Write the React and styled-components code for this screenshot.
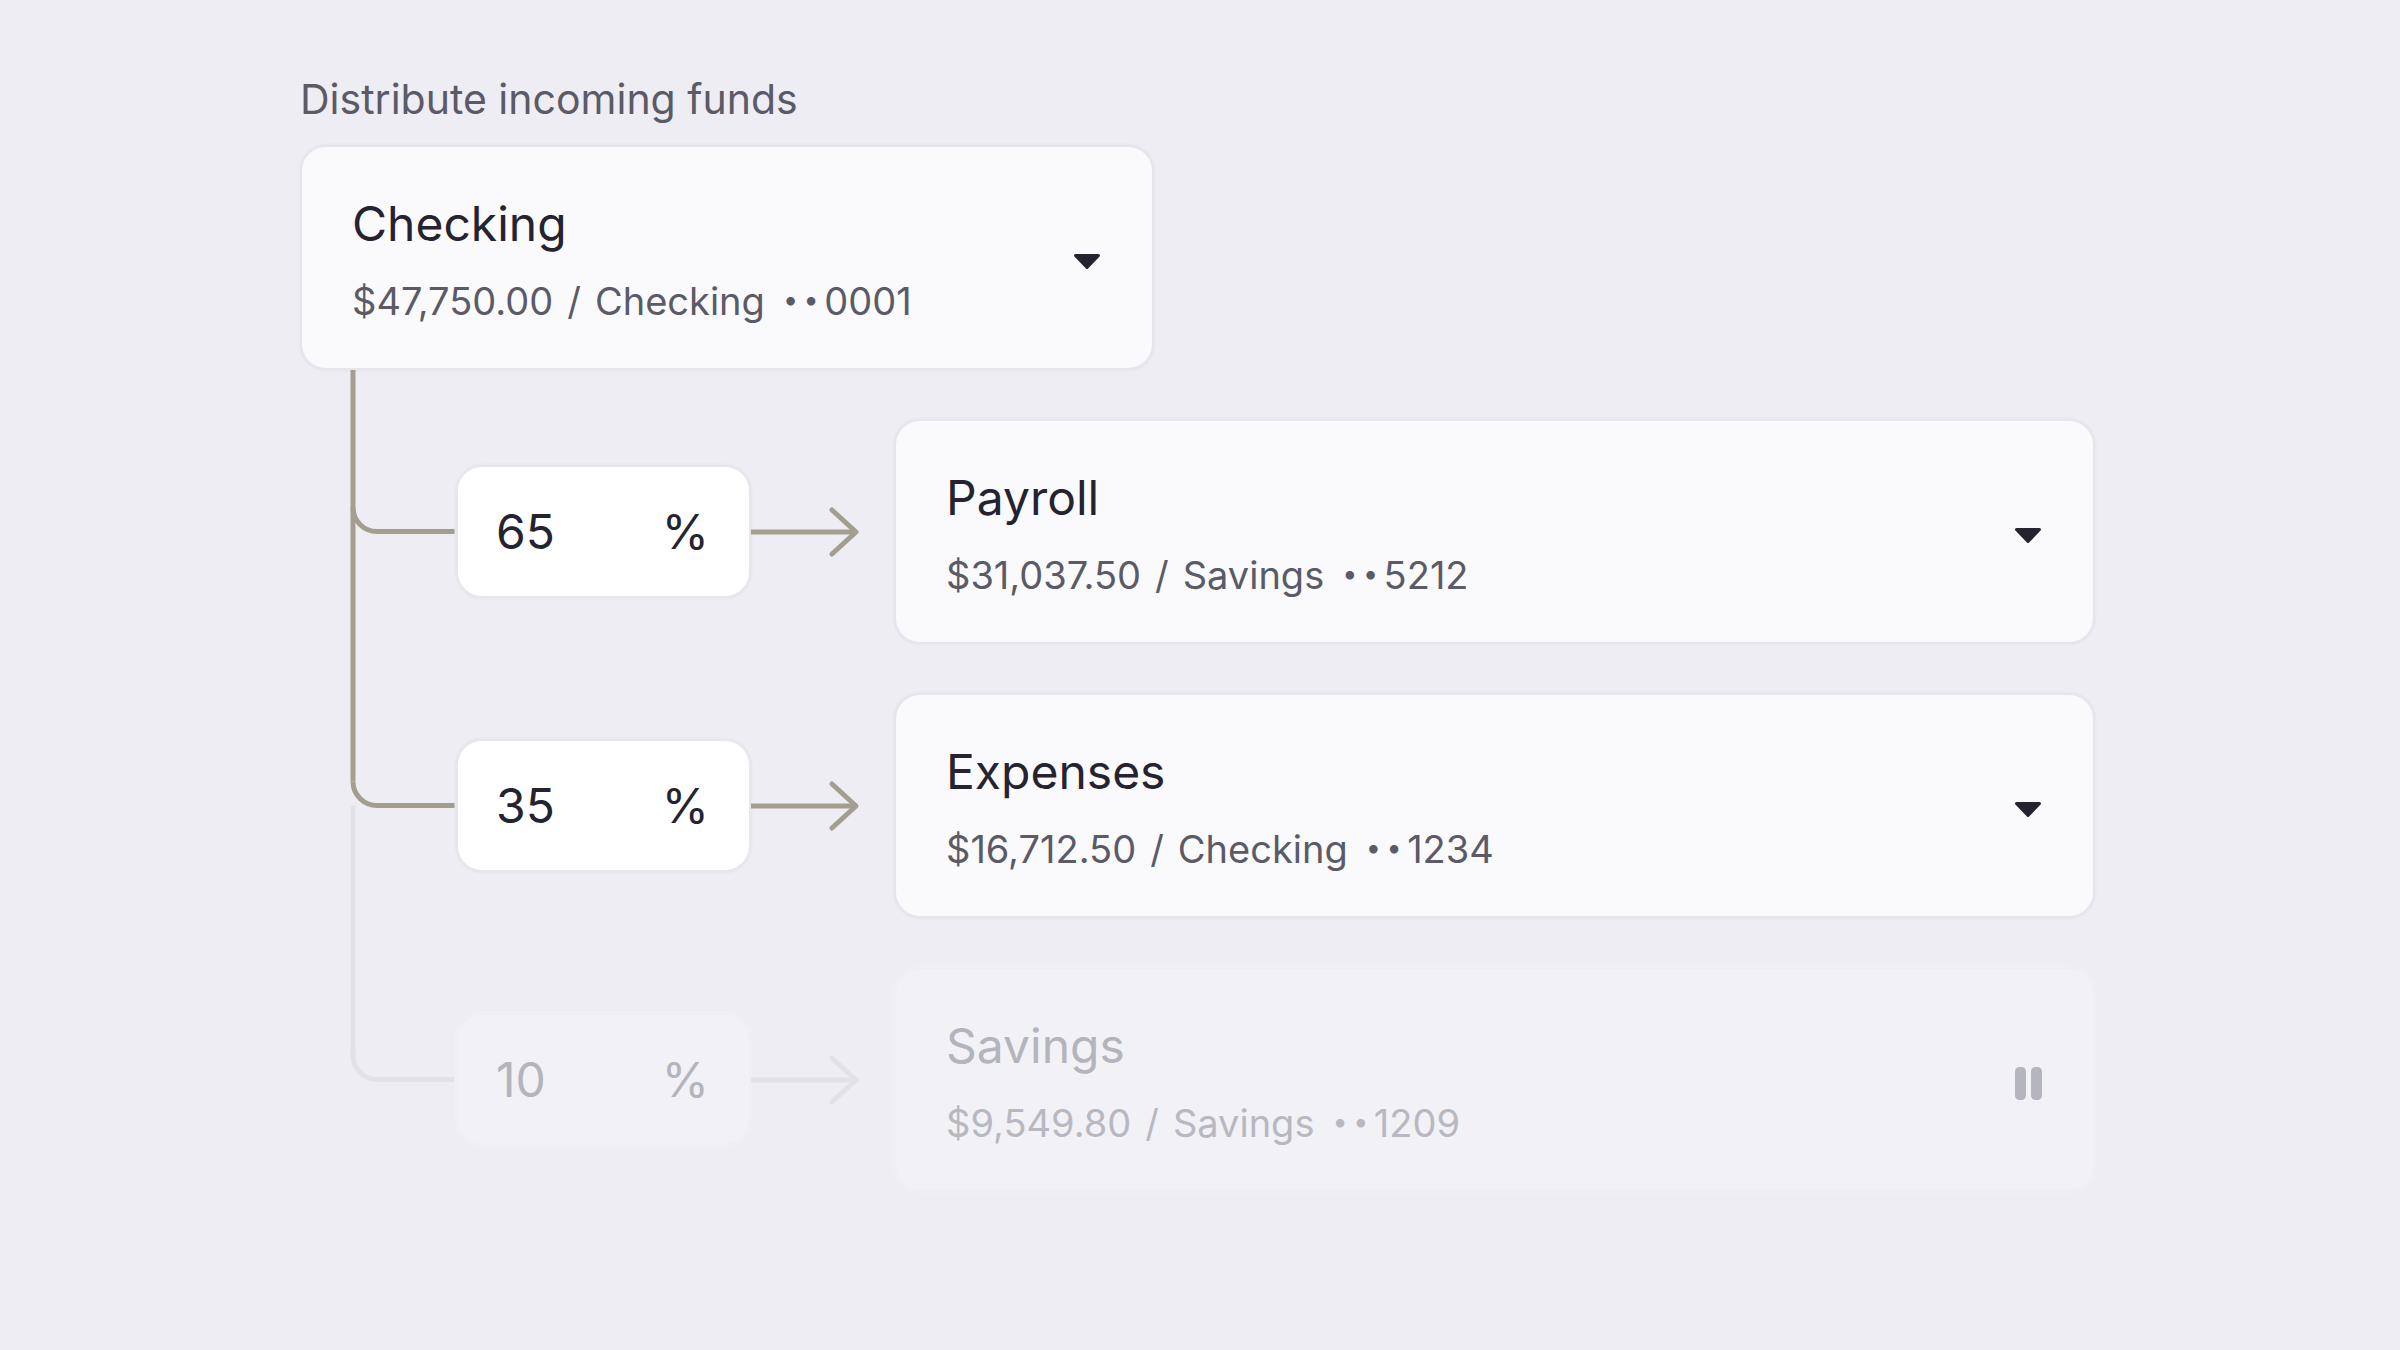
import styled, { createGlobalStyle } from 'styled-components';

const TAN = '#a49e91';
const GREY = '#e2e2e6';

const GlobalStyle = createGlobalStyle`
  * {
    box-sizing: border-box;
  }

  html,
  body {
    margin: 0;
    background: #eeedf3;
  }

  body {
    font-family: 'Inter', 'Noto Sans', sans-serif;
    color: #25232f;
  }
`;

const Page = styled.main`
  min-height: 100vh;
  padding: 74px 0 0 300px;
`;

const Flow = styled.section`
  width: 1795px;
  display: flex;
  flex-direction: column;
`;

const Label = styled.h2`
  margin: 0 0 21px;
  font-size: 41px;
  line-height: 50px;
  font-weight: 400;
  color: #5b5a66;
`;

const AccountCard = styled.div`
  display: flex;
  align-items: center;
  justify-content: space-between;
  flex: ${(p) => (p.$grow ? '1' : 'none')};
  width: ${(p) => p.$width || 'auto'};
  height: 225px;
  padding: 4px 51px 0 50px;
  border: 2px solid ${(p) => (p.$muted ? '#efeef3' : '#e6e5ec')};
  border-radius: 26px;
  background: ${(p) => (p.$muted ? '#f2f1f6' : '#fafafc')};
  box-shadow: 0 0 0 1.5px ${(p) => (p.$muted ? '#f0eff4' : '#e9e8ee')};
`;

const Info = styled.div`
  display: flex;
  flex-direction: column;
  gap: 24px;
`;

const Name = styled.div`
  font-size: 48px;
  line-height: 58px;
  color: ${(p) => (p.$muted ? '#b4b4bc' : '#25232f')};
`;

const Meta = styled.div`
  font-size: 38px;
  line-height: 46px;
  color: ${(p) => (p.$muted ? '#b8b8c0' : '#5b5a66')};
  white-space: nowrap;
`;

const Sep = styled.span`
  margin: 0 14px;
`;

const Dots = styled.span`
  margin-left: 18px;
  font-size: 27px;
  letter-spacing: 5.5px;
  vertical-align: 6px;
`;

const Control = styled.span`
  display: flex;
  margin-top: 4px;
`;

const Row = styled.div`
  display: flex;
  align-items: flex-end;
`;

const Lane = styled.div`
  flex: 1;
  display: flex;
  align-items: center;
`;

const Share = styled.div`
  flex: none;
  width: 295px;
  height: 133px;
  display: flex;
  align-items: center;
  justify-content: space-between;
  padding: 0 40px 0 38px;
  border: 2px solid ${(p) => (p.$muted ? '#efeef3' : '#e7e6ec')};
  border-radius: 26px;
  background: ${(p) => (p.$muted ? '#f2f1f6' : '#ffffff')};
  box-shadow: 0 0 0 1.5px ${(p) => (p.$muted ? '#f0eff4' : '#e9e8ee')};
  font-size: 48px;
  line-height: 58px;
  color: ${(p) => (p.$muted ? '#b4b4bc' : '#25232f')};
`;

const ArrowSvg = styled.svg`
  flex: none;
  display: block;
`;

const ConnectorSvg = styled.svg`
  flex: none;
  display: block;
`;

function Chevron() {
  return (
    <svg width="28" height="17" viewBox="0 0 28 17">
      <polygon
        points="2.5,2.5 25.5,2.5 14,14.5"
        fill="#25232f"
        stroke="#25232f"
        strokeWidth="3"
        strokeLinejoin="round"
      />
    </svg>
  );
}

function Pause() {
  return (
    <svg width="27" height="33" viewBox="0 0 27 33">
      <rect x="0" y="0" width="11" height="33" rx="4.5" fill="#b5b5bd" />
      <rect x="16" y="0" width="11" height="33" rx="4.5" fill="#b5b5bd" />
    </svg>
  );
}

// vertical trunk at x=53, branch into the lane at the card's middle
function Connector({ line, next }) {
  const x = 53;
  const y = 161.5;
  const r = 24;
  const branch = `M${x} ${y - r} A${r} ${r} 0 0 0 ${x + r} ${y} H156`;
  return (
    <ConnectorSvg width="156" height="274" viewBox="0 0 156 274">
      {next && next !== line && <path d={`M${x} ${y} V274`} stroke={next} strokeWidth="5" fill="none" />}
      {next === line ? (
        <path d={`M${x} 0 V274`} stroke={line} strokeWidth="5" fill="none" />
      ) : (
        <path d={`M${x} 0 V${y - r}`} stroke={line} strokeWidth="5" fill="none" />
      )}
      <path d={branch} stroke={line} strokeWidth="5" fill="none" />
    </ConnectorSvg>
  );
}

function Arrow({ color }) {
  return (
    <ArrowSvg width="143" height="52" viewBox="0 0 143 52">
      <path d="M0 26 H104" stroke={color} strokeWidth="5" fill="none" />
      <path
        d="M81 4 L105 26 L81 48"
        stroke={color}
        strokeWidth="5"
        fill="none"
        strokeLinecap="round"
        strokeLinejoin="round"
      />
    </ArrowSvg>
  );
}

function AccountMeta({ amount, type, last4, muted }) {
  return (
    <Meta $muted={muted}>
      {amount}
      <Sep>/</Sep>
      {type}
      <Dots>••</Dots>
      {last4}
    </Meta>
  );
}

const destinations = [
  { pct: 65, name: 'Payroll', amount: '$31,037.50', type: 'Savings', last4: '5212', line: TAN, next: TAN },
  { pct: 35, name: 'Expenses', amount: '$16,712.50', type: 'Checking', last4: '1234', line: TAN, next: GREY },
  { pct: 10, name: 'Savings', amount: '$9,549.80', type: 'Savings', last4: '1209', line: GREY, next: null, paused: true },
];

export default function App() {
  return (
    <>
      <GlobalStyle />
      <Page>
        <Flow>
          <Label>Distribute incoming funds</Label>
          <AccountCard $width="854px">
            <Info>
              <Name>Checking</Name>
              <AccountMeta amount="$47,750.00" type="Checking" last4="0001" />
            </Info>
            <Control>
              <Chevron />
            </Control>
          </AccountCard>

          {destinations.map((d) => (
            <Row key={d.name}>
              <Connector line={d.line} next={d.next} />
              <Lane>
                <Share $muted={d.paused}>
                  <span>{d.pct}</span>
                  <span>%</span>
                </Share>
                <Arrow color={d.paused ? GREY : TAN} />
                <AccountCard $grow $muted={d.paused}>
                  <Info>
                    <Name $muted={d.paused}>{d.name}</Name>
                    <AccountMeta amount={d.amount} type={d.type} last4={d.last4} muted={d.paused} />
                  </Info>
                  <Control>{d.paused ? <Pause /> : <Chevron />}</Control>
                </AccountCard>
              </Lane>
            </Row>
          ))}
        </Flow>
      </Page>
    </>
  );
}
